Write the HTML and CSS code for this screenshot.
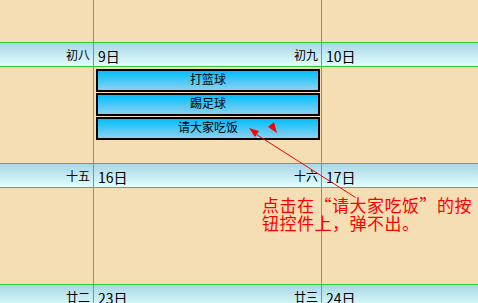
FILE: index.html
```html
<!DOCTYPE html>
<html lang="zh">
<head>
<meta charset="utf-8">
<link rel="stylesheet" href="styles.css">
</head>
<body>
<div class="page">
  <div class="cal">
    <div class="row body short">
      <div class="cell c1"></div><div class="cell c2"></div><div class="cell c3"></div>
    </div>

    <div class="row hdr">
      <div class="cell c1"><span class="day"></span><span class="lunar">初八</span></div>
      <div class="cell c2"><span class="day">9日</span><span class="lunar">初九</span></div>
      <div class="cell c3"><span class="day">10日</span><span class="lunar"></span></div>
    </div>
    <div class="row body">
      <div class="cell c1"></div>
      <div class="cell c2">
        <div class="ev">打篮球</div>
        <div class="ev">踢足球</div>
        <div class="ev">请大家吃饭</div>
      </div>
      <div class="cell c3"></div>
    </div>

    <div class="row hdr">
      <div class="cell c1"><span class="day"></span><span class="lunar">十五</span></div>
      <div class="cell c2"><span class="day">16日</span><span class="lunar">十六</span></div>
      <div class="cell c3"><span class="day">17日</span><span class="lunar"></span></div>
    </div>
    <div class="row body">
      <div class="cell c1"></div><div class="cell c2"></div><div class="cell c3"></div>
    </div>

    <div class="row hdr">
      <div class="cell c1"><span class="day"></span><span class="lunar">廿二</span></div>
      <div class="cell c2"><span class="day">23日</span><span class="lunar">廿三</span></div>
      <div class="cell c3"><span class="day">24日</span><span class="lunar"></span></div>
    </div>
    <div class="row body">
      <div class="cell c1"></div><div class="cell c2"></div><div class="cell c3"></div>
    </div>
  </div>

  <svg class="arrow" width="478" height="303" viewBox="0 0 478 303">
    <line x1="256.5" y1="134.5" x2="355.5" y2="197.5" stroke="#ff0000" stroke-width="1"/>
    <polygon points="249,128 259,131 255,137" fill="#ff0000"/>
    <polygon points="268,127 274,122 277,133" fill="#ff0000"/>
  </svg>

  <div class="note">点击在“请大家吃饭”的按<br>钮控件上，弹不出。</div>
</div>
</body>
</html>
```

FILE: styles.css
```css
html, body {
  margin: 0;
  padding: 0;
}
body {
  width: 478px;
  height: 303px;
  overflow: hidden;
  background: #f5deb3;
  font-family: "Noto Sans CJK SC", "Noto Sans", sans-serif;
}
.page {
  position: relative;
  width: 478px;
  height: 303px;
  overflow: hidden;
}
.cal {
  display: flex;
  flex-direction: column;
}
.row {
  display: grid;
  grid-template-columns: 94px 228px 1fr;
}
.cell {
  border-right: 1px solid #33cc33;
  box-sizing: border-box;
}
.c3 {
  border-right: none;
}
.body {
  height: 96px;
}
.body.short {
  height: 42px;
}
.hdr {
  height: 25px;
  box-sizing: border-box;
  border-top: 1px solid #33cc33;
  border-bottom: 1px solid #33cc33;
  background: linear-gradient(#a9d6e5, #e0ffff);
}
.hdr .cell {
  display: flex;
  justify-content: space-between;
  align-items: center;
  padding: 0 3px 0 4px;
  color: #000;
}
.day {
  font-size: 14px;
  line-height: 16px;
  padding-top: 2px;
}
.lunar {
  font-size: 12px;
  line-height: 14px;
}
.body .c2 {
  display: flex;
  flex-direction: column;
  gap: 1px;
  padding: 2px 1px 0 2px;
}
.ev {
  height: 23px;
  box-sizing: border-box;
  border: 2px solid #000;
  background: linear-gradient(#00bfff, #8dd0ee);
  font-size: 12px;
  line-height: 16px;
  text-align: center;
  color: #000;
}
.arrow {
  position: absolute;
  left: 0;
  top: 0;
  pointer-events: none;
}
.note {
  position: absolute;
  left: 262px;
  top: 196px;
  font-size: 17px;
  line-height: 18px;
  letter-spacing: 0.5px;
  color: #ff0000;
  white-space: nowrap;
}
```
